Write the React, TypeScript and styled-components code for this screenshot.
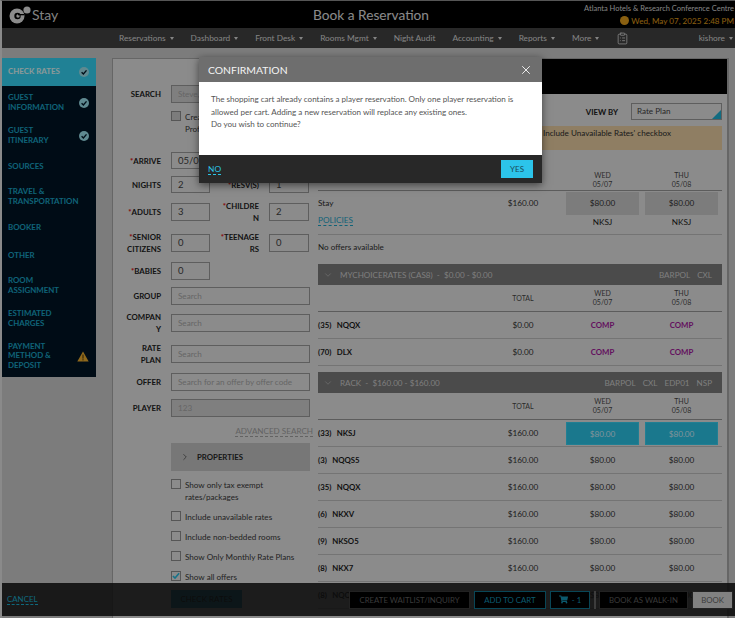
import React from 'react';
import styled, { createGlobalStyle } from 'styled-components';
import { ChevronDown, ChevronRight, ClipboardList, X } from 'lucide-react';
import { FaShoppingCart } from 'react-icons/fa';

const GlobalStyle = createGlobalStyle`
  html, body {
    margin: 0;
    padding: 0;
    background: #cfcfcf;
    font-family: Lato, "Open Sans", sans-serif;
    overflow: hidden;
  }
  * {
    box-sizing: border-box;
  }
`;

const Page = styled.div`
  position: relative;
  width: 735px;
  height: 618px;
  overflow: hidden;
  border-left: 2px solid #8a8a8a;
  border-top: 1px solid #555;
`;

const Header = styled.header`
  display: flex;
  align-items: center;
  height: 27px;
  margin-left: -2px;
  padding-left: 9px;
  background: #000;
  color: #fff;
`;

const LogoText = styled.span`
  margin-left: 1px;
  font-size: 14px;
  color: #d8d8d8;
`;

const Title = styled.h1`
  position: absolute;
  left: 311px;
  top: 5px;
  margin: 0;
  font-size: 13.7px;
  font-weight: 400;
  color: #e6e6e6;
`;

const HeaderInfo = styled.div`
  margin-left: auto;
  padding-right: 1px;
  text-align: right;
  font-size: 7.5px;
  line-height: 12px;
  color: #ddd;
`;

const DateLine = styled.div`
  display: flex;
  justify-content: flex-end;
  align-items: center;
  gap: 2px;
  font-size: 8.1px;
  color: #e6a11d;
`;

const Coin = styled.span`
  width: 9px;
  height: 9px;
  border-radius: 50%;
  background: #e6a11d;
`;

const Nav = styled.nav`
  display: flex;
  align-items: center;
  gap: 17px;
  height: 20px;
  margin-left: -2px;
  padding: 0 2px 0 119px;
  background: #444;
  color: #dcdcdc;
  font-size: 8.3px;
`;

const NavItem = styled.span<{ $right?: boolean }>`
  display: flex;
  align-items: center;
  gap: 4px;
  white-space: nowrap;
  margin-left: ${(p) => (p.$right ? 'auto' : '0')};
`;

const Caret = styled.i`
  width: 0;
  height: 0;
  border-left: 2.5px solid transparent;
  border-right: 2.5px solid transparent;
  border-top: 3px solid currentColor;
`;

const Body = styled.div`
  display: flex;
  align-items: flex-start;
  padding-top: 10px;
`;

const Sidebar = styled.aside`
  flex: none;
  width: 94px;
  height: 319px;
  background: #011525;
`;

const SideItem = styled.div<{ $h: number; $active?: boolean }>`
  display: flex;
  align-items: center;
  justify-content: space-between;
  height: ${(p) => p.$h}px;
  padding: 0 7px 0 6px;
  font-size: 7.9px;
  line-height: 9.6px;
  font-weight: 700;
  text-transform: uppercase;
  color: ${(p) => (p.$active ? '#e8ffff' : '#1aa5c8')};
  background: ${(p) => (p.$active ? '#36d8f8' : 'transparent')};
`;

const Panel = styled.main`
  display: flex;
  flex: none;
  width: 617px;
  height: 560px;
  margin-left: 16px;
  background: #e8e8e8;
  border-left: 1px solid #aaa;
  border-top: 1px solid #aaa;
  border-right: 2px solid #aaa;
`;

const FormColumn = styled.section`
  flex: none;
  width: 200px;
  padding: 26px 0 0 12px;
  color: #222;
  font-size: 8px;
`;

const Field = styled.div<{ $mt: number; $h?: number }>`
  display: flex;
  align-items: center;
  height: ${(p) => p.$h ?? 18}px;
  margin-top: ${(p) => p.$mt}px;
`;

const Label = styled.label<{ $second?: boolean }>`
  flex: none;
  width: ${(p) => (p.$second ? 39 : 36)}px;
  margin: 0 10px 0 ${(p) => (p.$second ? 10 : 0)}px;
  text-align: right;
  text-transform: uppercase;
  font-weight: 700;
  font-size: 7.8px;
  line-height: 12px;
  overflow-wrap: anywhere;
  color: #222;
`;

const Req = styled.b`
  color: #e02020;
`;

const Input = styled.div<{ $w?: number; $h?: number; $filled?: boolean; $ph?: boolean }>`
  flex: none;
  width: ${(p) => p.$w ?? 139}px;
  height: ${(p) => p.$h ?? 18}px;
  padding-left: 6px;
  line-height: ${(p) => (p.$h ?? 18) - 2}px;
  overflow: hidden;
  white-space: nowrap;
  font-size: ${(p) => (p.$ph ? 8.1 : 9.5)}px;
  color: ${(p) => (p.$ph ? '#aaa' : '#444')};
  background: ${(p) => (p.$filled ? '#d4d4d4' : '#e8e8e8')};
  border: 1px solid #9d9d9d;
  border-bottom-width: 1.5px;
`;

const CheckRow = styled.div<{ $mt: number }>`
  display: flex;
  align-items: flex-start;
  gap: 4px;
  margin: ${(p) => p.$mt}px 0 0 46px;
  font-size: 8.1px;
  line-height: 12px;
  color: #3a3a3a;
`;

const Box = styled.span<{ $soft?: boolean }>`
  display: flex;
  flex: none;
  align-items: center;
  justify-content: center;
  width: 10px;
  height: 10px;
  background: ${(p) => (p.$soft ? '#cfcfcf' : '#e8e8e8')};
  border: 1px solid #8f8f8f;
`;

const AdvancedLink = styled.div`
  margin-top: 8px;
  text-align: right;
  width: 188px;
  font-size: 8.1px;
  line-height: 12px;
  color: #a5a5a5;
`;

const Dashed = styled.span`
  border-bottom: 1px dashed currentColor;
`;

const Properties = styled.div`
  display: flex;
  align-items: center;
  gap: 7px;
  width: 139px;
  height: 28px;
  margin: 6px 0 0 46px;
  padding-left: 9px;
  background: #c6c6c6;
  font-size: 7.8px;
  font-weight: 700;
  color: #2a2a2a;
`;

const SubmitButton = styled.div`
  width: 71px;
  height: 18px;
  margin: 7px 0 0 46px;
  background: #1ba5c8;
  color: #0c0c0c;
  font-size: 8px;
  line-height: 18px;
  text-align: center;
`;

const ResultColumn = styled.section`
  flex: 1;
  min-width: 0;
`;

const BlackBar = styled.div`
  height: 35px;
  background: #000;
`;

const ResultBody = styled.div`
  padding: 9px 5px 0 5px;
`;

const ViewByRow = styled.div`
  display: flex;
  align-items: center;
  justify-content: flex-end;
  gap: 13px;
  height: 17px;
  font-size: 7.8px;
  font-weight: 700;
  color: #222;
`;

const Select = styled.div`
  position: relative;
  width: 91px;
  height: 17px;
  padding-left: 5px;
  line-height: 15px;
  font-size: 8.1px;
  font-weight: 400;
  color: #444;
  background: #e8e8e8;
  border: 1px solid #9d9d9d;
  overflow: hidden;

  &::after {
    content: '';
    position: absolute;
    right: 0;
    bottom: 0;
    border-left: 9px solid transparent;
    border-bottom: 9px solid #1fb4d8;
  }
`;

const Warning = styled.div`
  height: 24px;
  margin-top: 6px;
  padding: 1px 0 0 225px;
  background: #efd3a6;
  font-size: 8.1px;
  line-height: 12px;
  color: #2e2e2e;
`;

const TableRow = styled.div<{ $h: number; $line?: string; $end?: boolean }>`
  display: grid;
  grid-template-columns: 1fr 80px 79px 79px;
  align-items: ${(p) => (p.$end ? 'end' : 'center')};
  height: ${(p) => p.$h}px;
  padding: 0 1px ${(p) => (p.$end ? 1 : 0)}px 0;
  border-bottom: 1px solid ${(p) => p.$line ?? '#c2c2c2'};
  font-size: 8.2px;
  color: #2c2c2c;
`;

const DayHead = styled.div`
  text-align: center;
  font-size: 7px;
  line-height: 9px;
  color: #4a4a4a;
`;

const RoomCode = styled.div`
  font-weight: 700;
  word-spacing: 3.5px;
  font-size: 7.8px;
  color: #1c1c1c;
`;

const Amount = styled.div<{ $comp?: boolean }>`
  text-align: center;
  font-weight: ${(p) => (p.$comp ? 700 : 400)};
  font-size: ${(p) => (p.$comp ? 7.8 : 8.2)}px;
  color: ${(p) => (p.$comp ? '#a6189e' : '#333')};
`;

const PriceCell = styled.div<{ $selected?: boolean }>`
  height: 23px;
  margin: 0 3px;
  line-height: 22px;
  text-align: center;
  color: ${(p) => (p.$selected ? '#d8f4ff' : '#333')};
  background: ${(p) => (p.$selected ? '#2cc8ec' : '#cfcfcf')};
  border: ${(p) => (p.$selected ? '1px solid #38d4f6' : 'none')};
`;

const SubRow = styled.div`
  display: grid;
  grid-template-columns: 1fr 80px 79px 79px;
  height: 19px;
  padding-right: 1px;
  border-bottom: 1px solid #c2c2c2;
  font-size: 8.2px;
  line-height: 12px;
  color: #222;
  text-align: center;
`;

const PolicyLink = styled.div`
  margin-top: -2px;
  color: #1ba5c8;
  text-align: left;
`;

const NoOffers = styled.div`
  height: 29px;
  line-height: 25px;
  font-size: 8.1px;
  color: #333;
`;

const GroupBar = styled.div<{ $mt?: number }>`
  display: flex;
  align-items: center;
  gap: 7px;
  height: 21px;
  margin-top: ${(p) => p.$mt ?? 0}px;
  padding: 0 10px 0 5px;
  background: #7d7d7d;
  font-size: 8.1px;
  color: #d2d2d2;
`;

const GroupTag = styled.span<{ $first?: boolean }>`
  margin-left: ${(p) => (p.$first ? 'auto' : '0')};
`;

const Footer = styled.footer`
  position: absolute;
  left: -2px;
  right: 0;
  bottom: 2px;
  display: flex;
  align-items: center;
  gap: 4px;
  height: 33px;
  padding: 0 2px 0 7px;
  background: rgba(20, 20, 20, 0.88);
`;

const CancelLink = styled.span`
  margin-right: auto;
  font-size: 7.9px;
  color: #1aafd0;
  border-bottom: 1px dashed currentColor;
`;

const FootButton = styled.div<{ $w: number; $accent?: boolean; $light?: boolean }>`
  display: flex;
  align-items: center;
  justify-content: center;
  gap: 4px;
  width: ${(p) => p.$w}px;
  height: 18px;
  font-size: 7.8px;
  color: ${(p) => (p.$light ? '#666' : p.$accent ? '#1496b8' : '#606060')};
  background: ${(p) => (p.$light ? '#d8d8d8' : '#000')};
  border: 1px solid ${(p) => (p.$accent ? '#107590' : '#3a3a3a')};
`;

const Separator = styled.i`
  width: 2px;
  height: 18px;
  margin-right: -1px;
  background: #666;
`;

const Overlay = styled.div`
  position: absolute;
  inset: -1px 0 0 -2px;
  background: rgba(0, 0, 0, 0.4);
`;

const Modal = styled.div`
  position: absolute;
  left: 197px;
  top: 56px;
  width: 343px;
  box-shadow: 0 2px 8px rgba(0, 0, 0, 0.55);
`;

const ModalHeader = styled.div`
  display: flex;
  align-items: center;
  justify-content: space-between;
  height: 25px;
  padding: 0 9px;
  background: #6e6e6e;
  color: #f4f4f4;
  font-size: 10.4px;
`;

const ModalBody = styled.div`
  height: 73px;
  padding: 11px 12px;
  background: #fff;
  font-size: 8.05px;
  line-height: 12.6px;
  color: #555;
`;

const ModalFooter = styled.div`
  display: flex;
  align-items: center;
  justify-content: space-between;
  height: 28px;
  padding: 0 9px;
  background: #282828;
`;

const NoLink = styled.span`
  font-size: 8.4px;
  color: #2cc4e6;
  border-bottom: 1px dashed currentColor;
`;

const YesButton = styled.div`
  width: 32px;
  height: 18px;
  background: #2cc4ea;
  color: #1b4a57;
  font-size: 8px;
  line-height: 18px;
  text-align: center;
`;

const Logo = () => (
  <svg width="22" height="20" viewBox="0 0 22 20">
    <circle cx="8" cy="11" r="7.5" fill="#e8e8e8" />
    <circle cx="8.5" cy="11" r="3.2" fill="#000" />
    <circle cx="9" cy="11" r="1.7" fill="#e8e8e8" />
    <rect x="9" y="9" width="6" height="1.3" fill="#000" />
    <circle cx="18" cy="5" r="3.6" fill="#e8e8e8" />
  </svg>
);

const CheckCircle = () => (
  <svg width="10" height="10" viewBox="0 0 10 10">
    <circle cx="5" cy="5" r="5" fill="#9ee4f0" />
    <path d="M2.6 5.2 L4.4 7 L7.5 3.4" fill="none" stroke="#02192b" strokeWidth="1.4" />
  </svg>
);

const TriangleAlert = () => (
  <svg width="12" height="11" viewBox="0 0 12 11">
    <path d="M6 0.5 L11.7 10.5 L0.3 10.5 Z" fill="#f0b030" />
    <rect x="5.4" y="3.6" width="1.2" height="4" fill="#5c4410" />
    <rect x="5.4" y="8.2" width="1.2" height="1.2" fill="#5c4410" />
  </svg>
);

const TickMark = () => (
  <svg width="9" height="8" viewBox="0 0 9 8">
    <path d="M1 4 L3.4 6.4 L8 1" fill="none" stroke="#28c0e4" strokeWidth="1.8" />
  </svg>
);

const navItems = ['Reservations', 'Dashboard', 'Front Desk', 'Rooms Mgmt'];
const navItemsAfter = ['Accounting', 'Reports', 'More'];

const sideItems: { label: React.ReactNode; h: number; done?: boolean }[] = [
  { label: <>Guest<br />Information</>, h: 34, done: true },
  { label: <>Guest<br />Itinerary</>, h: 32, done: true },
  { label: 'Sources', h: 30 },
  { label: <>Travel &amp;<br />Transportation</>, h: 30 },
  { label: 'Booker', h: 31 },
  { label: 'Other', h: 26 },
  { label: <>Room<br />Assignment</>, h: 33 },
  { label: <>Estimated<br />Charges</>, h: 33 },
];

const rackRows = [
  ['(33)', 'NKSJ'],
  ['(3)', 'NQQS5'],
  ['(35)', 'NQQX'],
  ['(6)', 'NKXV'],
  ['(9)', 'NKSO5'],
  ['(8)', 'NKX7'],
  ['(8)', 'NQQK'],
];

const options: { label: React.ReactNode; mt: number; checked?: boolean }[] = [
  { label: <>Show only tax exempt<br />rates/packages</>, mt: 8 },
  { label: 'Include unavailable rates', mt: 8 },
  { label: 'Include non-bedded rooms', mt: 8 },
  { label: 'Show Only Monthly Rate Plans', mt: 8 },
  { label: 'Show all offers', mt: 8, checked: true },
];

const DayHeads = () => (
  <>
    <DayHead>WED<br />05/07</DayHead>
    <DayHead>THU<br />05/08</DayHead>
  </>
);

const App: React.FC = () => (
  <Page>
    <GlobalStyle />
    <Header>
      <Logo />
      <LogoText>Stay</LogoText>
      <Title>Book a Reservation</Title>
      <HeaderInfo>
        Atlanta Hotels &amp; Research Conference Centre
        <DateLine>
          <Coin />
          Wed, May 07, 2025 2:48 PM
        </DateLine>
      </HeaderInfo>
    </Header>
    <Nav>
      {navItems.map((item) => (
        <NavItem key={item}>
          {item} <Caret />
        </NavItem>
      ))}
      <NavItem>Night Audit</NavItem>
      {navItemsAfter.map((item) => (
        <NavItem key={item}>
          {item} <Caret />
        </NavItem>
      ))}
      <ClipboardList size={13} strokeWidth={1.5} />
      <NavItem $right>
        kishore <Caret />
      </NavItem>
    </Nav>
    <Body>
      <Sidebar>
        <SideItem $h={28} $active>
          Check Rates <CheckCircle />
        </SideItem>
        {sideItems.map((item, i) => (
          <SideItem key={i} $h={item.h}>
            <span>{item.label}</span>
            {item.done && <CheckCircle />}
          </SideItem>
        ))}
        <SideItem $h={42}>
          <span>Payment<br />Method &amp;<br />Deposit</span>
          <TriangleAlert />
        </SideItem>
      </Sidebar>
      <Panel>
        <FormColumn>
          <Field $mt={0}>
            <Label>Search</Label>
            <Input $filled $ph>Steve, Smith</Input>
          </Field>
          <CheckRow $mt={8}>
            <Box $soft />
            <span>Create Guest<br />Profile</span>
          </CheckRow>
          <Field $mt={17} $h={17}>
            <Label><Req>*</Req>Arrive</Label>
            <Input $h={17} $w={60}>05/07/2025</Input>
          </Field>
          <Field $mt={7} $h={17}>
            <Label>Nights</Label>
            <Input $h={17} $w={39}>2</Input>
            <Label $second><Req>*</Req>Resv(s)</Label>
            <Input $h={17} $w={40}>1</Input>
          </Field>
          <Field $mt={10}>
            <Label><Req>*</Req>Adults</Label>
            <Input $w={39}>3</Input>
            <Label $second><Req>*</Req>Children</Label>
            <Input $w={40}>2</Input>
          </Field>
          <Field $mt={13}>
            <Label><Req>*</Req>Senior Citizens</Label>
            <Input $w={39}>0</Input>
            <Label $second><Req>*</Req>Teenagers</Label>
            <Input $w={40}>0</Input>
          </Field>
          <Field $mt={10}>
            <Label><Req>*</Req>Babies</Label>
            <Input $w={39}>0</Input>
          </Field>
          <Field $mt={7}>
            <Label>Group</Label>
            <Input $ph>Search</Input>
          </Field>
          <Field $mt={9}>
            <Label>Company</Label>
            <Input $ph>Search</Input>
          </Field>
          <Field $mt={13}>
            <Label>Rate Plan</Label>
            <Input $ph>Search</Input>
          </Field>
          <Field $mt={10}>
            <Label>Offer</Label>
            <Input $ph>Search for an offer by offer code</Input>
          </Field>
          <Field $mt={8}>
            <Label>Player</Label>
            <Input $filled $ph>123</Input>
          </Field>
          <AdvancedLink><Dashed>ADVANCED SEARCH</Dashed></AdvancedLink>
          <Properties>
            <ChevronRight size={10} strokeWidth={1.4} />
            PROPERTIES
          </Properties>
          {options.map((o, i) => (
            <CheckRow key={i} $mt={o.mt}>
              <Box>{o.checked && <TickMark />}</Box>
              <span>{o.label}</span>
            </CheckRow>
          ))}
          <SubmitButton>CHECK RATES</SubmitButton>
        </FormColumn>
        <ResultColumn>
          <BlackBar />
          <ResultBody>
            <ViewByRow>
              VIEW BY
              <Select>Rate Plan</Select>
            </ViewByRow>
            <Warning>Include Unavailable Rates' checkbox</Warning>
            <TableRow $h={41} $line="#9a9a9a" $end>
              <span />
              <span />
              <DayHeads />
            </TableRow>
            <TableRow $h={25} $line="transparent">
              <span>Stay</span>
              <Amount>$160.00</Amount>
              <PriceCell>$80.00</PriceCell>
              <PriceCell>$80.00</PriceCell>
            </TableRow>
            <SubRow>
              <PolicyLink><Dashed>POLICIES</Dashed></PolicyLink>
              <span />
              <span>NKSJ</span>
              <span>NKSJ</span>
            </SubRow>
            <NoOffers>No offers available</NoOffers>
            <GroupBar>
              <ChevronDown size={10} strokeWidth={1.3} />
              MYCHOICERATES (CAS8) &nbsp;-&nbsp; $0.00 - $0.00
              <GroupTag $first>BARPOL</GroupTag>
              <GroupTag>CXL</GroupTag>
            </GroupBar>
            <TableRow $h={27} $line="#9a9a9a">
              <span />
              <DayHead>TOTAL</DayHead>
              <DayHeads />
            </TableRow>
            <TableRow $h={27}>
              <RoomCode>(35) NQQX</RoomCode>
              <Amount>$0.00</Amount>
              <Amount $comp>COMP</Amount>
              <Amount $comp>COMP</Amount>
            </TableRow>
            <TableRow $h={27}>
              <RoomCode>(70) DLX</RoomCode>
              <Amount>$0.00</Amount>
              <Amount $comp>COMP</Amount>
              <Amount $comp>COMP</Amount>
            </TableRow>
            <GroupBar $mt={6}>
              <ChevronDown size={10} strokeWidth={1.3} />
              RACK &nbsp;-&nbsp; $160.00 - $160.00
              <GroupTag $first>BARPOL</GroupTag>
              <GroupTag>CXL</GroupTag>
              <GroupTag>EDP01</GroupTag>
              <GroupTag>NSP</GroupTag>
            </GroupBar>
            <TableRow $h={27} $line="#9a9a9a">
              <span />
              <DayHead>TOTAL</DayHead>
              <DayHeads />
            </TableRow>
            {rackRows.map(([count, code], i) => (
              <TableRow $h={27} key={code + count}>
                <RoomCode>{count} {code}</RoomCode>
                <Amount>$160.00</Amount>
                {i === 0 ? (
                  <>
                    <PriceCell $selected>$80.00</PriceCell>
                    <PriceCell $selected>$80.00</PriceCell>
                  </>
                ) : (
                  <>
                    <Amount>$80.00</Amount>
                    <Amount>$80.00</Amount>
                  </>
                )}
              </TableRow>
            ))}
          </ResultBody>
        </ResultColumn>
      </Panel>
    </Body>
    <Footer>
      <CancelLink>CANCEL</CancelLink>
      <FootButton $w={121}>CREATE WAITLIST/INQUIRY</FootButton>
      <FootButton $w={72} $accent>ADD TO CART</FootButton>
      <FootButton $w={40} $accent><FaShoppingCart size={9} /> - 1</FootButton>
      <Separator />
      <FootButton $w={89}>BOOK AS WALK-IN</FootButton>
      <FootButton $w={41} $light>BOOK</FootButton>
    </Footer>
    <Overlay />
    <Modal>
      <ModalHeader>
        CONFIRMATION
        <X size={14} strokeWidth={1.6} />
      </ModalHeader>
      <ModalBody>
        The shopping cart already contains a player reservation. Only one player reservation is
        allowed per cart. Adding a new reservation will replace any existing ones.
        <br />
        Do you wish to continue?
      </ModalBody>
      <ModalFooter>
        <NoLink>NO</NoLink>
        <YesButton>YES</YesButton>
      </ModalFooter>
    </Modal>
  </Page>
);

export default App;
